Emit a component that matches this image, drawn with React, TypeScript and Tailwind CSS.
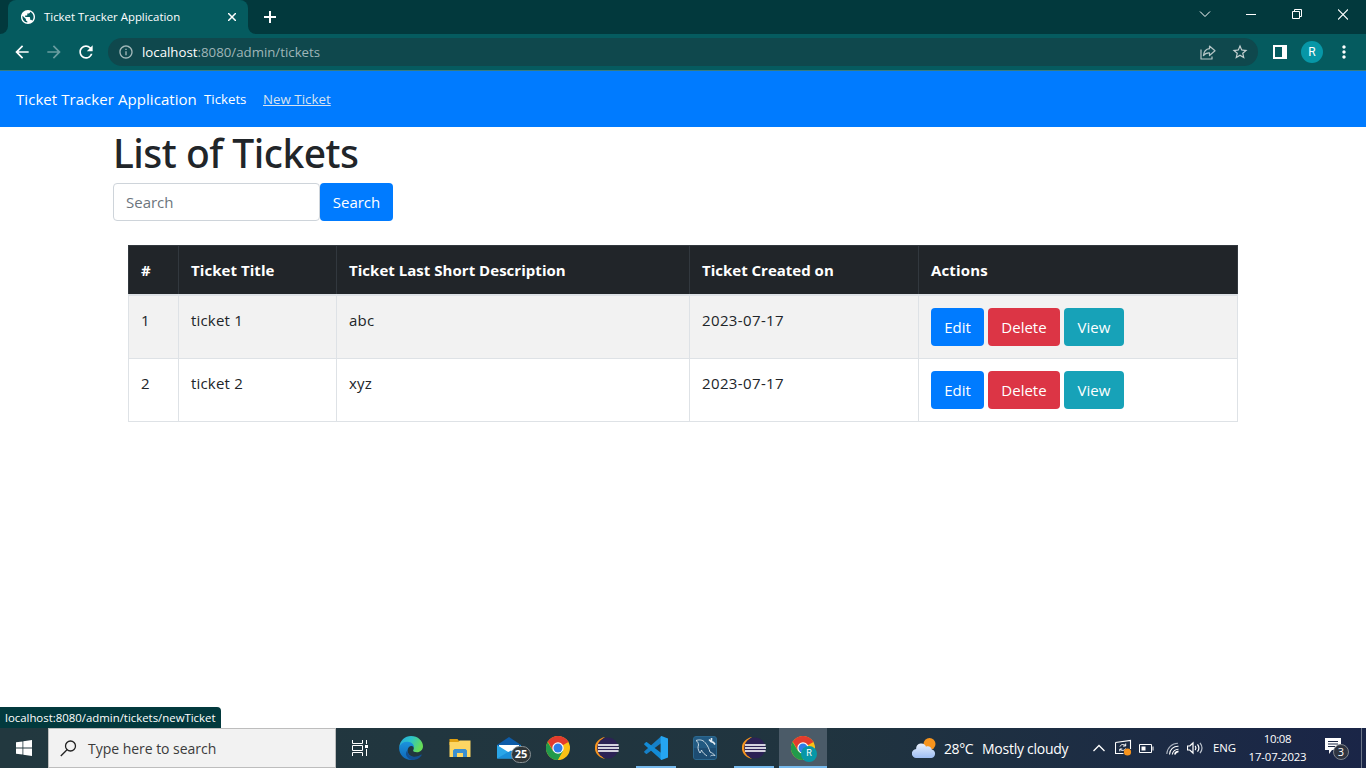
import React from "react";
import {
  MdPublic,
  MdArrowBack,
  MdArrowForward,
  MdRefresh,
  MdInfoOutline,
  MdStarBorder,
  MdMoreVert,
} from "react-icons/md";

const tickets = [
  { id: 1, title: "ticket 1", description: "abc", created: "2023-07-17" },
  { id: 2, title: "ticket 2", description: "xyz", created: "2023-07-17" },
];

function TabStrip() {
  return (
    <div className="flex h-[34px] shrink-0 bg-[#02393d]">
      <div className="flex w-2 items-end bg-[#055b5f]">
        <div className="h-full w-2 rounded-br-lg bg-[#02393d]" />
      </div>
      <div className="flex w-[240px] items-center rounded-t-lg bg-[#055b5f] pl-3 text-white">
        <MdPublic className="size-4 scale-105" />
        <span className="ml-2 text-[11.4px] leading-4">Ticket Tracker Application</span>
        <svg className="mr-3 ml-auto size-2" viewBox="0 0 8 8" stroke="#fff" strokeWidth="1.5">
          <path d="M0 0l8 8M8 0L0 8" />
        </svg>
      </div>
      <div className="flex w-2 bg-[#055b5f]">
        <div className="h-full w-2 rounded-bl-lg bg-[#02393d]" />
      </div>
      <svg className="mt-[11px] ml-2 size-3" viewBox="0 0 12 12" stroke="#fff" strokeWidth="2">
        <path d="M6 0v12M0 6h12" />
      </svg>
      <div className="ml-auto flex items-start pt-[9px] pr-[18px]">
        <svg className="mr-[35px] h-[11px] w-3" viewBox="0 0 12 11" fill="none" stroke="#fff">
          <path d="M1 2.500l5 5 5-5" />
        </svg>
        <svg className="mr-9 h-[11px] w-2.5" viewBox="0 0 10 11" stroke="#fff">
          <path d="M0 5.500h10" />
        </svg>
        <svg className="mr-[36px] h-[11px] w-2.5" viewBox="0 0 10 11" fill="none" stroke="#fff">
          <path d="M.5 2.500h7v7h-7zM2.500 2.500v-2h7v7h-2" />
        </svg>
        <svg className="h-[11px] w-2.5" viewBox="0 0 10 11" stroke="#fff" strokeWidth="1.100">
          <path d="M0 .5l10 10M10 .5L0 10.500" />
        </svg>
      </div>
    </div>
  );
}

function AddressBar() {
  return (
    <div className="flex h-[37px] shrink-0 items-start border-b border-[#377c7f] bg-[#055b5f] pt-1 pl-3">
      <div className="flex h-7 w-24 items-center gap-3 text-white">
        <MdArrowBack className="size-5" />
        <MdArrowForward className="size-5 text-[#6a9da0]" />
        <MdRefresh className="size-5" />
      </div>
      <div className="flex h-7 w-[1150px] items-center rounded-full bg-[#0f484d] pr-[9px] pl-2.5">
        <MdInfoOutline className="size-4 text-[#a3b9ba]" />
        <span className="ml-2 text-[13.25px] leading-5 text-[#9fb6b8]">
          <span className="text-white">localhost</span>:8080/admin/tickets
        </span>
        <svg
          className="mr-[15px] ml-auto h-[15px] w-4"
          viewBox="0 0 16 15"
          fill="none"
          stroke="#b5c5c6"
          strokeWidth="1.200"
          strokeLinejoin="round"
        >
          <path d="M1 4.500v9.500h11v-2.500" />
          <path d="M9.500 1l5.500 4.800-5.500 4.700V7.800C6.500 7.600 4.800 8.500 3.400 10.600 3.800 6.700 6 4.100 9.500 3.700z" />
        </svg>
        <MdStarBorder className="size-[18px] text-[#c6d1d2]" />
      </div>
      <div className="flex h-7 items-center pl-[15px]">
        <div className="h-3.5 w-3.5 border-2 border-r-[5px] border-white" />
        <div className="ml-3.5 flex size-[22px] items-center justify-center rounded-full bg-[#0797a7] font-[Roboto] text-[12px] text-white">
          R
        </div>
        <MdMoreVert className="ml-[11px] size-5 text-white" />
      </div>
    </div>
  );
}

function Navbar() {
  return (
    <nav className="flex h-14 shrink-0 items-center bg-[#007bff] pl-4 text-white">
      <span className="w-[188px] text-[15px] tracking-[0.06px]">Ticket Tracker Application</span>
      <span className="w-[59px] pt-0.5 text-[13.25px]">Tickets</span>
      <span className="pt-0.5 text-[13.25px] tracking-[0.05px] text-[#d8e3f0] underline">New Ticket</span>
    </nav>
  );
}

const btn = "flex h-[38px] items-center justify-center rounded text-[15px] text-white";

function TicketTable() {
  const th = "border border-[#32383e] border-b-2 border-b-[#dee2e6] px-3 py-0 text-left font-bold";
  const td = "border border-[#dee2e6] px-3 pt-3 align-top";
  return (
    <table className="mt-6 ml-[15px] w-[1110px] table-fixed border-collapse border border-[#dee2e6] text-[15px] leading-6">
      <colgroup>
        <col className="w-[50px]" />
        <col className="w-[158px]" />
        <col className="w-[353px]" />
        <col className="w-[229px]" />
        <col />
      </colgroup>
      <thead className="bg-[#212529] text-white">
        <tr className="h-[49px]">
          <th className={th}>#</th>
          <th className={`${th} tracking-[0.06px]`}>Ticket Title</th>
          <th className={`${th} tracking-[0.03px]`}>Ticket Last Short Description</th>
          <th className={th}>Ticket Created on</th>
          <th className={`${th} tracking-[0.15px]`}>Actions</th>
        </tr>
      </thead>
      <tbody>
        {tickets.map((t) => (
          <tr key={t.id} className="h-[63px] odd:h-[64px] odd:bg-[#f2f2f2]">
            <td className={td}>{t.id}</td>
            <td className={`${td} tracking-[0.18px]`}>{t.title}</td>
            <td className={`${td} tracking-[0.2px]`}>{t.description}</td>
            <td className={`${td} tracking-[0.37px]`}>{t.created}</td>
            <td className={td}>
              <div className="flex gap-1">
                <span className={`${btn} w-[53px] bg-[#007bff]`}>Edit</span>
                <span className={`${btn} w-[72px] bg-[#dc3545]`}>Delete</span>
                <span className={`${btn} w-[60px] bg-[#17a2b8]`}>View</span>
              </div>
            </td>
          </tr>
        ))}
      </tbody>
    </table>
  );
}

function ChromeIcon() {
  return (
    <svg className="size-6" viewBox="0 0 24 24">
      <circle cx="12" cy="12" r="12" fill="#fbc116" />
      <path d="M12 12L1.600 6A12 12 0 0 1 22.400 6z" fill="#e33b2e" />
      <path d="M12 6h10.400L18 3 2 5.500l5 9.400z" fill="#e33b2e" />
      <path d="M1.600 6A12 12 0 0 0 12 24l5.200-9L12 12 7 14.900z" fill="#229a4b" />
      <path d="M12 24l5.200-9 .200-6h5.200A12 12 0 0 1 12 24z" fill="#fbc116" />
      <circle cx="12" cy="12" r="5.700" fill="#fff" />
      <circle cx="12" cy="12" r="4.500" fill="#2f7de9" />
    </svg>
  );
}

function EclipseIcon() {
  return (
    <svg className="size-6" viewBox="0 0 24 24">
      <path d="M10 1C-3.500 4-3.500 20 10 23 2 18 2 6 10 1z" fill="#f7941e" />
      <circle cx="12.800" cy="12" r="10.600" fill="#2c2255" />
      <path d="M3 9h20.500M3 12h21M3 15h20.500" stroke="#a9a4bd" strokeWidth="2" />
      <path d="M3 9h20.500M3 12h21M3 15h20.500" stroke="#fff" strokeWidth="1.100" />
    </svg>
  );
}

function EdgeIcon() {
  return (
    <svg className="size-6" viewBox="0 0 24 24">
      <defs>
        <linearGradient id="edgeTop" x1="0" y1="0" x2="1" y2=".4">
          <stop offset="0" stopColor="#27a8de" />
          <stop offset=".5" stopColor="#2cc4c8" />
          <stop offset="1" stopColor="#66dc58" />
        </linearGradient>
        <linearGradient id="edgeLow" x1="0" y1="0" x2="0" y2="1">
          <stop offset="0" stopColor="#1b93dc" />
          <stop offset="1" stopColor="#0f67b8" />
        </linearGradient>
      </defs>
      <path
        d="M.2 11C1 4.500 6 0 12 0c7 0 12 5 12 10.300 0 3.500-2.800 6-6 6-2.600 0-4.300-1-3.800-2 1.800-3-.2-6.600-4.200-6.600C5 7.700 1.500 9 .2 11z"
        fill="url(#edgeTop)"
      />
      <path
        d="M.2 11C1.500 7.500 5 5.600 8.700 5.800c4 .2 6.600 3 6.300 6-2-3.600-7-1-6.400 3.500.5 4.400 6 7.300 11 5.300C17.500 22.800 15 24 12 24 5 24-.6 18 .2 11z"
        fill="url(#edgeLow)"
      />
      <path
        d="M8.600 14c-.6 6 6.400 9 13 4.800.8-.5 1.300 0 .9.600C20.500 22.300 17 24 13.200 24 8 23 4.800 17.500 8.600 14z"
        fill="#124f92"
      />
    </svg>
  );
}

function ExplorerIcon() {
  return (
    <svg className="size-6" viewBox="0 0 24 24">
      <path d="M1.500 3h8l1.500 2v4h-9.500z" fill="#e0a010" />
      <path d="M1.500 6h9l1-1.500h11V21h-21z" fill="#fdd663" />
      <path d="M5 21v-6.500l1.500-1.500h11l1.500 1.500V21h-4v-4H9v4z" fill="#3b8fd0" />
    </svg>
  );
}

function MailIcon() {
  return (
    <div className="relative size-6">
      <svg className="size-6" viewBox="0 0 24 24">
        <path d="M0 9L12 1l12 8v13H0z" fill="#0d5ba8" />
        <path d="M2 9h20v8H2z" fill="#fff" />
        <path d="M0 9l12 7.500L24 9v13.500H0z" fill="#2aa6e8" />
        <path d="M0 22.500l14-8 10 8z" fill="#1b8fd9" />
      </svg>
      <div className="absolute top-[10px] left-[14px] flex h-[17px] w-5 items-center justify-center rounded-full border border-[#8a9296] bg-[#303638] text-[11px] font-bold text-white">
        25
      </div>
    </div>
  );
}

function VsCodeIcon() {
  return (
    <svg className="size-6" viewBox="0 0 24 24">
      <path d="M18 6.500L3 17.800c-.4.300-.8.300-1.100 0L.4 16.500c-.4-.4-.4-.9 0-1.200L17.500 0z" fill="#1680c8" />
      <path d="M18 17.500L3 6.200c-.4-.3-.8-.3-1.100 0L.4 7.500c-.4.400-.4.900 0 1.200L17.500 24z" fill="#138bd6" />
      <path d="M17.500 0L24 2.600v18.800L17.500 24c-.8-.3-.9-.700-.9-1.400V1.400c0-.7.1-1.100.9-1.400z" fill="#25a5f2" />
    </svg>
  );
}

function MySqlIcon() {
  return (
    <svg className="size-6" viewBox="0 0 24 24" fill="none">
      <rect x=".5" y=".5" width="23" height="23" rx="2.500" fill="#225a82" stroke="#2b678e" />
      <path d="M1 12h22v9a2 2 0 0 1-2 2H3a2 2 0 0 1-2-2z" fill="#1d4c72" />
      <path
        d="M3 4.500C6 3.500 9.500 3.500 12 6.500c3 3.200 4 6.500 5 9.500 1.500.8 3.500 1.500 5 3.500-2-.3-3.500-.5-4.500.5M3 4.500c1.500 1 2.300 2 2.500 4.500-1 2.500-.5 5 1.500 8 .8-1.200 1.200-2 1.500-3 1 2.800 3 4 5.500 6"
        stroke="#c9d9e3"
        strokeWidth="1"
      />
      <path d="M16 3.500l2 2 2.500 1 1.500 2M18.500 2v3.500" stroke="#e6eef3" strokeWidth="1.600" />
    </svg>
  );
}

function TaskButton({ children, open, active }: { children: React.ReactNode; open?: boolean; active?: boolean }) {
  return (
    <div className={active ? "flex w-12 flex-col items-center bg-[#4b5b68]" : "flex w-12 flex-col items-center"}>
      <div className="flex h-[38px] items-center pt-0.5">{children}</div>
      <div className={active ? "h-0.5 w-12 bg-[#76b9ed]" : open ? "h-0.5 w-10 bg-[#76b9ed]" : "h-0.5"} />
    </div>
  );
}

function WeatherIcon() {
  return (
    <svg className="h-5 w-6" viewBox="0 0 24 20">
      <defs>
        <linearGradient id="cloud" x1="0" y1="0" x2="0" y2="1">
          <stop offset="0" stopColor="#e8f0fc" />
          <stop offset="1" stopColor="#9dbdf3" />
        </linearGradient>
      </defs>
      <circle cx="17.500" cy="6" r="6" fill="#f7941d" />
      <path
        d="M4.500 20a4.500 4.500 0 0 1-.3-9A4.800 4.800 0 0 1 8.500 5.500c2.800-.5 5 1.300 5.500 3.200 3-1.200 5.300.6 5.700 2.700A4.400 4.400 0 0 1 19.500 20z"
        fill="url(#cloud)"
      />
    </svg>
  );
}

function Tray() {
  return (
    <div className="ml-auto flex items-center text-white">
      <WeatherIcon />
      <span className="ml-2 w-[38px] text-[14px] tracking-[-0.4px]">28°C</span>
      <span className="w-[111px] text-[14px] tracking-[-0.26px]">Mostly cloudy</span>
      <svg className="mr-2.5 h-3 w-3" viewBox="0 0 12 12" fill="none" stroke="#fff" strokeWidth="1.300">
        <path d="M.5 9L6 3.500 11.500 9" />
      </svg>
      <svg className="mr-[7px] h-[18px] w-[17px]" viewBox="0 0 17 18" fill="none" stroke="#fff">
        <path d="M.5 3.500L15.500 1.500V10M.5 3.500v11h8" strokeWidth="1.100" />
        <path d="M5 7.500C6 5 9.500 4.800 10.500 7M10.700 4.500V7H8M10.500 9.500C9.500 12 6 12 5 10M4.800 12.300V10h2.500" />
        <circle cx="12.500" cy="13" r="3.600" fill="#f7941d" stroke="none" />
      </svg>
      <svg className="mr-3 h-3 w-[15px]" viewBox="0 0 15 12" fill="none" stroke="#fff">
        <path d="M.5 2.500h12v8H.5zM14 4.500v4" />
        <path d="M2.500 4.500h4v4h-4z" fill="#fff" stroke="none" />
      </svg>
      <svg className="mr-2 h-[13px] w-[13px]" viewBox="0 0 13 13" fill="none" stroke="#fff" strokeWidth="1.100">
        <path d="M.8 12A11.200 11.200 0 0 1 12 1.200" stroke="#a8b0bd" />
        <path d="M3.500 12.500A8.500 8.500 0 0 1 12.500 4.200M6.300 12.500a6 6 0 0 1 6.200-5.300" />
        <path d="M9 12.500a3 3 0 0 1 3.500-2.800" strokeWidth="1.800" />
      </svg>
      <svg className="mr-2.5 h-[14px] w-4" viewBox="0 0 16 14" fill="none" stroke="#fff" strokeWidth="1.200">
        <path d="M.5 5h2.300L6 2v10L2.800 9H.5z" />
        <path d="M8.200 4.800q1.500 2.200 0 4.400M10.500 3.300q2.800 3.700 0 7.400" />
        <path d="M13 1.800q4 5.200 0 10.400" stroke="#bcc3cd" />
      </svg>
      <span className="w-[25px] text-[11.4px] tracking-[-0.1px]">ENG</span>
      <div className="flex w-[79px] flex-col items-center pb-px text-[11.4px] leading-[18px]">
        <span className="tracking-[-0.35px]">10:08</span>
        <span className="tracking-[-0.15px]">17-07-2023</span>
      </div>
      <div className="relative ml-2 h-[22px] w-6">
        <svg className="h-[18px] w-[17px]" viewBox="0 0 17 18" fill="#fff">
          <path d="M0 1h16v12H7l-3 4v-4H0z" />
          <path d="M3 4.500h10M3 7h10M3 9.500h7" stroke="#1d2a46" />
        </svg>
        <div className="absolute top-[7px] left-2 flex size-4 items-center justify-center rounded-full border border-[#7e848c] bg-[#2e3440] text-[11px]">
          3
        </div>
      </div>
      <div className="ml-3 h-10 w-[5px] border-l border-[#6c7688]" />
    </div>
  );
}

function Taskbar() {
  return (
    <div className="flex h-10 shrink-0 bg-linear-to-r from-[#22383f] via-[#20343f] via-60% to-[#1a2547]">
      <div className="flex w-12 items-center justify-center">
        <svg className="size-4" viewBox="0 0 16 16" fill="#fff">
          <path d="M0 2.300L6.500 1.400v6.100H0zM7.300 1.300L16 0v7.500H7.300zM0 8.400h6.500v6.200L0 13.700zM7.300 8.400H16V16l-8.700-1.300z" />
        </svg>
      </div>
      <div className="flex w-72 items-center border border-[#bdbdbd] bg-[#f2f2f2] pl-[11px]">
        <svg className="size-[17px]" viewBox="0 0 17 17" fill="none" stroke="#222" strokeWidth="1.300">
          <circle cx="10.500" cy="6" r="5" />
          <path d="M7 9.700L.8 16" />
        </svg>
        <span className="ml-[11px] text-[14px] tracking-[-0.03px] text-[#3b3b3b]">Type here to search</span>
      </div>
      <div className="flex w-[51px] items-center pl-4">
        <svg className="h-4 w-[17px]" viewBox="0 0 17 16" fill="none" stroke="#fff">
          <path d="M.5 0v3.500h10V0M.5 5.500h10v5H.5zM.5 16v-3.500h10V16M14.500 0v4M14.500 9v7" />
          <path d="M13 5h3v3h-3z" fill="#fff" stroke="none" />
        </svg>
      </div>
      <div className="flex gap-px">
        <TaskButton><EdgeIcon /></TaskButton>
        <TaskButton><ExplorerIcon /></TaskButton>
        <TaskButton><MailIcon /></TaskButton>
        <TaskButton><ChromeIcon /></TaskButton>
        <TaskButton><EclipseIcon /></TaskButton>
        <TaskButton open><VsCodeIcon /></TaskButton>
        <TaskButton><MySqlIcon /></TaskButton>
        <TaskButton open><EclipseIcon /></TaskButton>
        <TaskButton active>
          <div className="relative size-6">
            <ChromeIcon />
            <div className="absolute top-[10px] left-[10px] flex size-4 items-center justify-center rounded-full bg-[#0797a7] font-[Roboto] text-[9px] text-white">
              R
            </div>
          </div>
        </TaskButton>
      </div>
      <Tray />
    </div>
  );
}

export default function App() {
  return (
    <div className="flex h-[768px] w-[1366px] flex-col overflow-hidden bg-white font-['Open_Sans','Noto_Sans',sans-serif] whitespace-nowrap text-[#212529]">
      <TabStrip />
      <AddressBar />
      <Navbar />
      <main className="flex flex-1 flex-col px-[113px]">
        <h1 className="mb-1.5 pt-0.5 font-['Noto_Sans',sans-serif] text-[39px] leading-[48px] font-medium tracking-[-0.5px]">
          List of Tickets
        </h1>
        <form className="flex">
          <div className="flex h-[38px] w-[207px] items-center rounded border border-[#ced4da] pl-3 text-[15px] text-[#6c757d]">
            Search
          </div>
          <span className={`${btn} w-[73px] bg-[#007bff]`}>Search</span>
        </form>
        <TicketTable />
        <div className="mt-auto -ml-[113px] flex h-[21px] w-[221px] items-center rounded-tr bg-[#02393d] pl-[5px] text-[11.4px] text-white">
          localhost:8080/admin/tickets/newTicket
        </div>
      </main>
      <Taskbar />
    </div>
  );
}
